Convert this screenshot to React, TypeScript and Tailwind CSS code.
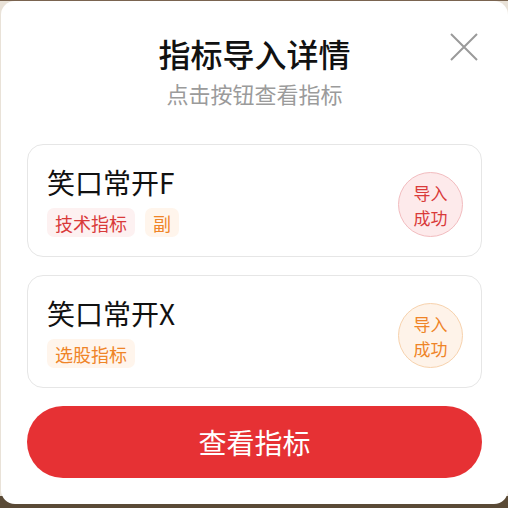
const font = "font-['Noto_Sans_CJK_SC','Noto_Sans',sans-serif]";

type Tag = { label: string; tone: "red" | "orange" };
type Item = { name: string; tags: Tag[]; tone: "red" | "orange" };

const items: Item[] = [
  { name: "笑口常开F", tags: [{ label: "技术指标", tone: "red" }, { label: "副", tone: "orange" }], tone: "red" },
  { name: "笑口常开X", tags: [{ label: "选股指标", tone: "orange" }], tone: "orange" },
];

function TagChip({ tag }: { tag: Tag }) {
  const cls =
    tag.tone === "red"
      ? "bg-[#fdf1f1] text-[#d93a3a]"
      : "bg-[#fff5ec] text-[#ef8427]";
  return (
    <span className={`inline-flex h-[29px] items-center rounded-[7px] px-[8px] text-[18px] leading-none ${cls}`}>
      {tag.label}
    </span>
  );
}

function StatusBadge({ tone }: { tone: "red" | "orange" }) {
  const cls =
    tone === "red"
      ? "bg-[#fdeaeb] border-[#f2bcbf] text-[#d93a3a]"
      : "bg-[#fef3e9] border-[#f7d2ad] text-[#ef8427]";
  return (
    <div className={`mt-[27px] flex h-[65px] w-[65px] flex-shrink-0 flex-col items-center justify-center rounded-full border text-[17px] leading-[25px] ${cls}`}>
      <span>导入</span>
      <span>成功</span>
    </div>
  );
}

export default function App() {
  return (
    <div className={`h-[508px] w-[508px] overflow-hidden bg-[linear-gradient(to_bottom,#7a6450_0px,#7a6450_1px,#e9e2d8_1px,#e9e2d8_496px,#5a4a36_496px)] ${font}`}>
      <div className="relative ml-[1px] mt-[1px] h-[503px] w-[507px] rounded-[14px] bg-white px-[26px] pt-[32px]">
        {/* close */}
        <button className="absolute right-[30px] top-[32px] h-[28px] w-[28px]">
          <svg viewBox="0 0 28 28" className="h-[28px] w-[28px]" fill="none" stroke="#9a9a9a" strokeWidth="2">
            <path d="M1 1 L27 27 M27 1 L1 27" />
          </svg>
        </button>

        <h1 className="text-center text-[32px] font-medium leading-[40px] text-[#111]">指标导入详情</h1>
        <p className="mt-[6px] text-center text-[22px] leading-[28px] text-[#9b9b9b]">点击按钮查看指标</p>

        <div className="mt-[37px] flex flex-col gap-[18px]">
          {items.map((it) => (
            <div key={it.name} className="flex h-[113px] items-start justify-between rounded-[16px] border border-[#e6e6e6] pl-[19px] pr-[18px]">
              <div className="flex flex-col pt-[19px]">
                <div className="text-[28px] leading-[36px] text-[#111]">{it.name}</div>
                <div className="mt-[8px] flex gap-[10px]">
                  {it.tags.map((t) => (
                    <TagChip key={t.label} tag={t} />
                  ))}
                </div>
              </div>
              <StatusBadge tone={it.tone} />
            </div>
          ))}
        </div>

        <button className="mt-[18px] flex h-[72px] w-full items-center justify-center rounded-full bg-[#e63134] text-[28px] text-white">
          查看指标
        </button>
      </div>
    </div>
  );
}
